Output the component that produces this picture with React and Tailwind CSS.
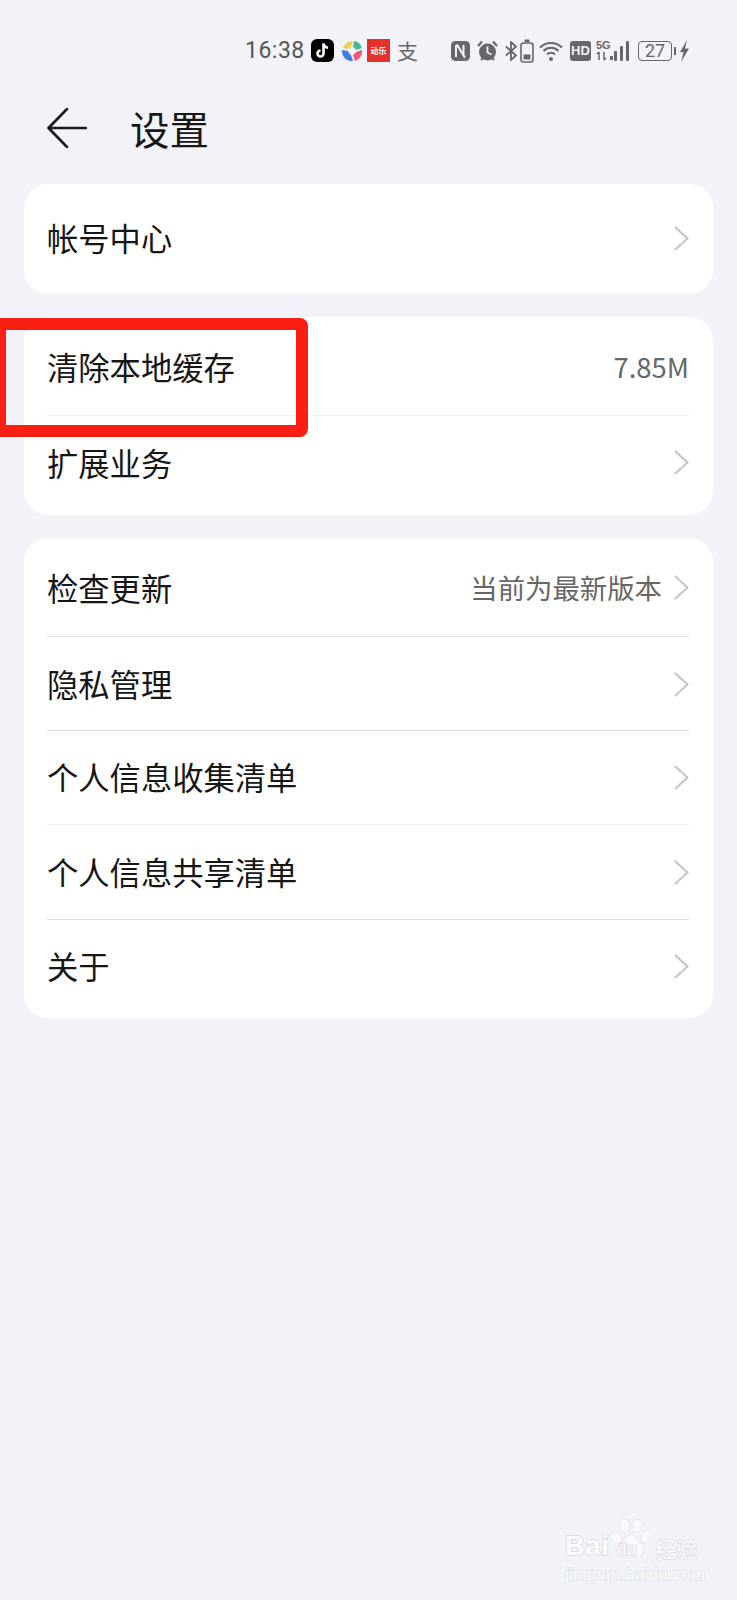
import React from 'react';

function Chevron() {
    return (
        <svg width="15" height="25" viewBox="0 0 15 25" fill="none" className="shrink-0">
            <path d="M1.5 1.5 L13.5 12.5 L1.5 23.5" stroke="#c6c6c8" strokeWidth="2.2" strokeLinecap="round" strokeLinejoin="round" />
        </svg>
    );
}

function Row({ title, value, arrow = true, divider = true, h = 'h-[95px]', pb = '', light = false }) {
    return (
        <div className={`relative flex items-center justify-between ${h} ${pb}`}>
            <span className="text-[31.3px] text-[#161616] leading-none">{title}</span>
            <div className="flex items-center gap-[12px]">
                {value && <span className="text-[27.4px] text-[#676767] leading-none">{value}</span>}
                {arrow && <Chevron />}
            </div>
            {divider && <div className={`absolute left-0 right-0 bottom-0 h-px ${light ? 'bg-[#f1f1f3]' : 'bg-[#dfdfe1]'}`}></div>}
        </div>
    );
}

function StatusBar() {
    return (
        <div className="flex items-center h-[100px] pl-[245px] pt-[1px]">
            <span className="text-[23px] text-[#55565a] w-[66px] leading-none tracking-[0.5px] font-['Roboto',sans-serif]">16:38</span>
            {/* tiktok */}
            <svg width="23" height="23" viewBox="0 0 23 23">
                <rect width="23" height="23" rx="6" fill="#000" />
                <path d="M12.5 4.5v10a3 3 0 1 1-3-3M12.5 4.5c.4 2.6 2 4 4.5 4.2" stroke="#fff" strokeWidth="2.6" fill="none" />
            </svg>
            {/* colored ring */}
            <svg width="24" height="24" viewBox="0 0 24 24" className="ml-[6px]">
                <path d="M3 9 A10 10 0 0 1 13 2 L11 8 A5 5 0 0 0 8 10 Z" fill="#f4ce4c" />
                <path d="M14 2 A10 10 0 0 1 22 9 L16 11 A5 5 0 0 0 13 8 Z" fill="#3fbf8f" />
                <path d="M22 11 A10 10 0 0 1 15 22 L13 16 A5 5 0 0 0 16 13 Z" fill="#ee5a6f" />
                <path d="M13 22 A10 10 0 0 1 2 11 L8 12 A5 5 0 0 0 11 16 Z" fill="#3f7fe8" />
            </svg>
            {/* red app */}
            <div className="ml-[3px] w-[23px] h-[23px] bg-[#e5312a] flex items-center justify-center text-white text-[8px] leading-none font-bold whitespace-nowrap">动乐</div>
            <span className="ml-[7px] w-[22px] text-[21px] leading-none text-[#66676b]">支</span>
            {/* nfc */}
            <svg width="19" height="20" viewBox="0 0 19 20" className="ml-[32px]">
                <rect width="19" height="20" rx="4.5" fill="#66676b" />
                <path d="M5 16V5.500l1.500-1 6 10V4M4.500 4.500h2M12.500 15.500h2" stroke="#f0f2f7" strokeWidth="2" fill="none" />
            </svg>
            {/* alarm */}
            <svg width="21" height="22" viewBox="0 0 21 22" className="ml-[7px]">
                <circle cx="10.500" cy="12" r="8.500" fill="#66676b" />
                <path d="M1 6l4-4.500M20 6l-4-4.500M4 20l2-2M17 20l-2-2" stroke="#66676b" strokeWidth="2.2" />
                <path d="M10.500 6.500v6l4 2" stroke="#f0f2f7" strokeWidth="1.8" fill="none" />
            </svg>
            {/* bluetooth */}
            <svg width="13" height="20" viewBox="0 0 13 20" className="ml-[7px]">
                <path d="M1 5.500l10 9-5 4.500V1l5 4.500-10 9" stroke="#66676b" strokeWidth="1.8" fill="none" />
            </svg>
            {/* small battery */}
            <svg width="14" height="24" viewBox="0 0 14 24" className="ml-[2px]">
                <rect x="1" y="4" width="12" height="19" rx="2.500" stroke="#66676b" strokeWidth="1.600" fill="none" />
                <rect x="4.500" y="0.500" width="5" height="2.500" fill="#66676b" />
                <rect x="3.500" y="15.500" width="7" height="5" fill="#66676b" />
            </svg>
            {/* wifi */}
            <svg width="24" height="22" viewBox="0 0 24 22" className="ml-[5px]">
                <path d="M1 7.500a15.500 15.500 0 0 1 22 0M4.500 11a10.500 10.500 0 0 1 15 0M8 14.500a5.500 5.500 0 0 1 8 0" stroke="#66676b" strokeWidth="2" fill="none" />
                <circle cx="12" cy="19" r="2" fill="#66676b" />
            </svg>
            {/* hd */}
            <div className="ml-[7px] w-[21px] h-[20px] rounded-[3px] bg-[#66676b] flex items-center justify-center text-[#f0f2f7] text-[13px] font-bold leading-none font-['Liberation_Sans',sans-serif]">HD</div>
            {/* 5g + signal */}
            <div className="ml-[5px] w-[18px] flex flex-col items-start">
                <span className="text-[11px] font-bold leading-[11px] text-[#66676b] font-['Liberation_Sans',sans-serif]">5G</span>
                <svg width="18" height="10" viewBox="0 0 18 10">
                    <path d="M3 1v8M1 3l2-2M8 9V1M10 7l-2 2" stroke="#66676b" strokeWidth="1.500" fill="none" />
                    <rect x="14" y="5" width="3" height="4" fill="#66676b" />
                </svg>
            </div>
            <svg width="16" height="20" viewBox="0 0 16 20" className="self-center mt-[1px]">
                <rect x="0" y="10" width="3" height="10" rx="1" fill="#66676b" />
                <rect x="6" y="5" width="3" height="15" rx="1" fill="#66676b" />
                <rect x="12" y="0" width="3" height="20" rx="1" fill="#66676b" />
            </svg>
            {/* battery */}
            <div className="ml-[8px] w-[34px] h-[20px] rounded-[4px] border-[1.5px] border-[#66676b] flex items-center justify-center text-[18px] leading-none text-[#66676b] font-['Roboto',sans-serif]">27</div>
            <div className="ml-[2px] w-[2px] h-[8px] bg-[#66676b]"></div>
            <svg width="11" height="22" viewBox="0 0 11 22" className="ml-[3px]">
                <path d="M8 0L1 12h3.500l-2.500 10 8-13.500H6z" fill="#66676b" />
            </svg>
        </div>
    );
}

export default function App() {
    return (
        <div className="relative w-[737px] h-[1600px] overflow-hidden bg-[#f1f3f8] font-['Noto_Sans_CJK_SC',sans-serif]">
            <StatusBar />

            <div className="flex items-center h-[59px] pl-[47px] pb-[4px]">
                <svg width="40" height="40" viewBox="0 0 40 40" fill="none">
                    <path d="M20 1 L1.500 20 L20 39 M2 20 H39" stroke="#1b1b1b" strokeWidth="2.600" strokeLinecap="round" strokeLinejoin="round" />
                </svg>
                <h1 className="ml-[43px] text-[39.5px] leading-none text-[#161616]">设置</h1>
            </div>

            <div className="px-6 pt-[25px] flex flex-col gap-[23px]">
                <div className="bg-white rounded-[24px] pl-[23px] pr-6">
                    <Row title="帐号中心" h="h-[110px]" pb="pb-[2px]" divider={false} />
                </div>

                <div className="bg-white rounded-[24px] pl-[23px] pr-6">
                    <Row title="清除本地缓存" value="7.85M" arrow={false} h="h-[99px]" light />
                    <Row title="扩展业务" h="h-[99px]" pb="pb-[6px]" divider={false} />
                </div>

                <div className="bg-white rounded-[24px] pl-[23px] pr-6">
                    <Row title="检查更新" value="当前为最新版本" h="h-[99px]" />
                    <Row title="隐私管理" h="h-[94px]" />
                    <Row title="个人信息收集清单" h="h-[94px]" pb="pb-[2px]" light />
                    <Row title="个人信息共享清单" h="h-[95px]" pb="pb-[1px]" />
                    <Row title="关于" h="h-[98px]" pb="pb-[6px]" divider={false} />
                </div>
            </div>

            {/* red annotation box */}
            <div className="absolute left-[-6px] top-[318px] w-[314px] h-[119px] border-[12px] border-[#fb1f13] rounded-[8px]"></div>

            {/* watermark */}
            <div className="absolute left-[565px] top-[1519px] w-[140px] text-[#fbfbfd] [-webkit-text-stroke:2px_#dcdfe6] [paint-order:stroke_fill]">
                <svg width="42" height="43" viewBox="0 0 40 40" className="absolute left-[44px] top-[0px]" fill="#f9fafc" stroke="#d9dce3" strokeWidth="1">
                    <ellipse cx="7" cy="17" rx="4.500" ry="6" transform="rotate(-30 7 17)" />
                    <ellipse cx="15" cy="6" rx="4.500" ry="6" />
                    <ellipse cx="27" cy="6" rx="4.500" ry="6" />
                    <ellipse cx="35" cy="16" rx="4.500" ry="6" transform="rotate(30 35 16)" />
                    <path d="M21 15c-5 0-6 5-10 8-4 4-2 13 4 13h12c6 0 8-9 4-13-4-3-5-8-10-8z" />
                </svg>
                <div className="flex items-end h-[41px] leading-none font-['Liberation_Sans',sans-serif] font-bold">
                    <span className="text-[27px] tracking-[1px]">Bai</span>
                    <span className="ml-[7px] mb-[2px] text-[16px] text-[#f6f7fa] relative">du</span>
                    <span className="ml-[19px] mb-[1px] text-[21px] font-['Noto_Sans_CJK_SC',sans-serif] font-normal [-webkit-text-stroke:1.5px_#dcdfe6]">经验</span>
                </div>
                <div className="mt-[6px] text-[17px] leading-none tracking-[0.2px] font-['Liberation_Sans',sans-serif] whitespace-nowrap [-webkit-text-stroke:1.5px_#e0e3e9]">jingyan.baidu.com</div>
            </div>
        </div>
    );
}
